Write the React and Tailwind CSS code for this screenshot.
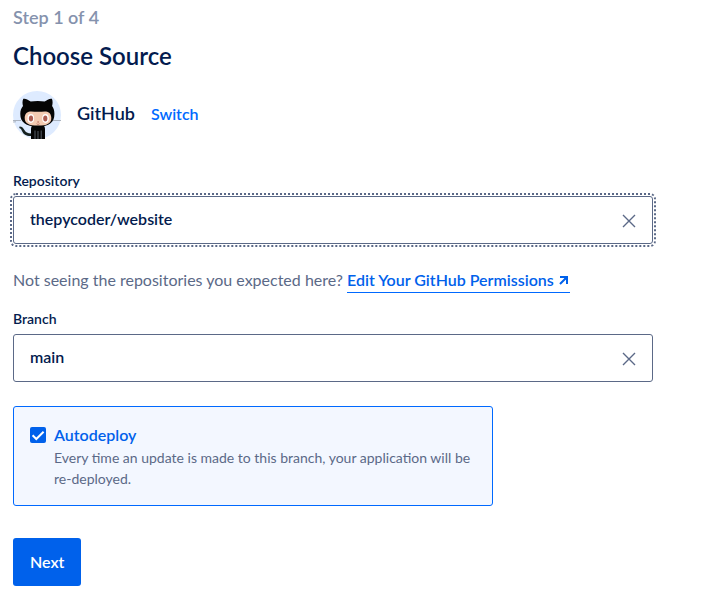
import React from "react";

function Octocat() {
  return (
    <svg viewBox="0 0 48 48" className="size-12 shrink-0" role="img" aria-label="GitHub">
      <circle cx="24" cy="24" r="24" fill="#deebff" />
      <path d="M0 29.500h8M0 31l3-.2M40 29.500h8" stroke="#a3acb8" strokeWidth="0.900" />
      <path
        d="M6.500 35.600c2.600.2 3.900 1.600 4.900 3.400 1.200 2.200 3 3.400 7.200 3.500l-.2 2.500c-5.200.2-8-1.800-9.400-5.100-.6-1.500-1.300-2.300-2.700-2.900z"
        fill="#15211f"
      />
      <path d="M18 38c0-3 2-5 7-5s7 2 7 5v10H18z" fill="#050505" />
      <path d="M22 39.500v8.500M25 40v8M28.200 39.500v8.500" stroke="#6a7380" strokeWidth="0.800" />
      <path
        d="M10.300 7.800c2-.7 5.500 1.200 7.400 2.800 2-.5 4.400-.7 7-.7s4.900.2 6.900.7c2-1.600 5.400-3.500 7.300-2.800 1 2.300.8 5 .2 7.200 1.600 2.200 2.300 4.600 2.300 8 0 8.200-4.700 12.600-16.700 12.600S7.300 31.200 7.300 23c0-3.400.9-5.800 2.700-8-.6-2.200-.8-4.900.3-7.200z"
        fill="#050505"
      />
      <path
        d="M17 20.500c2.400-.2 5 .3 8 .3s5.600-.5 8-.3c3.400.3 5.300 3.200 5.300 6.500 0 5.500-4.100 7.600-13.300 7.600s-13.300-2.100-13.300-7.600c0-3.300 1.900-6.200 5.300-6.500z"
        fill="#f4cbb2"
      />
      <ellipse cx="17.800" cy="27.500" rx="3.300" ry="4.400" fill="#fff" />
      <ellipse cx="32.500" cy="27.500" rx="3.300" ry="4.400" fill="#fff" />
      <ellipse cx="18" cy="27.600" rx="2.100" ry="3" fill="#ad5c51" />
      <ellipse cx="32.300" cy="27.600" rx="2.100" ry="3" fill="#ad5c51" />
      <circle cx="25.100" cy="31" r="0.700" fill="#ad5c51" />
      <path d="M23.600 32.700c.8.900 2.200.9 3 0" fill="none" stroke="#ad5c51" strokeWidth="0.700" />
    </svg>
  );
}

function ClearableField({ id, label, value, focused = false }) {
  return (
    <div>
      <label htmlFor={id} className="mb-[5px] block text-sm leading-5 font-semibold text-[#031b4e]">
        {label}
      </label>
      <div
        className={
          focused
            ? "flex h-12 items-center rounded-[3px] border border-[#5b6987] outline-2 outline-offset-1 outline-dotted outline-[#5b6987]"
            : "flex h-12 items-center rounded-[3px] border border-[#5b6987]"
        }
      >
        <input
          id={id}
          type="text"
          defaultValue={value}
          className="h-full min-w-0 flex-1 bg-transparent pb-[3px] pl-4 text-base font-semibold text-[#031b4e] outline-none"
        />
        <button type="button" aria-label={"Clear " + label} className="mr-4 pt-px text-[#5b6987]">
          <svg viewBox="0 0 14 14" className="size-[14px]" fill="none" stroke="currentColor" strokeWidth="1.400">
            <path d="M1 1l12 12M13 1L1 13" />
          </svg>
        </button>
      </div>
    </div>
  );
}

export default function App() {
  return (
    <main className="bg-white px-[13px] pt-[5px] pb-3 font-[Lato,sans-serif] text-base">
      <form className="max-w-[640px]" onSubmit={(e) => e.preventDefault()}>
        <p className="text-lg leading-6 font-semibold text-[#8592ad]">Step 1 of 4</p>
        <h1 className="mt-[11px] text-2xl leading-8 font-semibold text-[#031b4e]">Choose Source</h1>

        <div className="mt-[19px] mb-8 flex items-center gap-4">
          <Octocat />
          <div className="flex items-baseline gap-4 pb-1">
            <h2 className="text-lg leading-6 font-semibold text-[#031b4e]">GitHub</h2>
            <a href="#switch" className="font-semibold text-[#0069ff]">Switch</a>
          </div>
        </div>

        <ClearableField id="repository" label="Repository" value="thepycoder/website" focused />

        <p className="mt-6 mb-4 leading-6 text-[#5b6987]">
          Not seeing the repositories you expected here?{" "}
          <a
            href="#permissions"
            className="inline-flex items-center gap-1 border-b border-[#0069ff] font-semibold text-[#0061eb]"
          >
            Edit Your GitHub Permissions
            <svg viewBox="0 0 12 12" className="size-3" fill="none" stroke="currentColor" strokeWidth="2">
              <path d="M2 3h7v7M9 3L2 10" />
              <path d="M5 3h4v4z" fill="currentColor" stroke="none" />
            </svg>
          </a>
        </p>

        <ClearableField id="branch" label="Branch" value="main" />

        <div className="mt-6 flex min-h-[100px] max-w-[480px] items-start gap-2 rounded-[3px] border border-[#0069ff] bg-[#f3f7ff] px-4 pt-4">
          <span className="mt-1 grid size-4 shrink-0">
            <input
              id="autodeploy"
              type="checkbox"
              defaultChecked
              aria-describedby="autodeploy-hint"
              className="col-start-1 row-start-1 size-4 appearance-none rounded-xs bg-[#0061eb]"
            />
            <svg
              viewBox="0 0 16 16"
              className="pointer-events-none col-start-1 row-start-1 size-4"
              fill="none"
              stroke="#fff"
              strokeWidth="2"
            >
              <path d="M2.600 8.300l3.700 3.700 7.300-7.300" />
            </svg>
          </span>
          <div>
            <label htmlFor="autodeploy" className="block leading-6 font-semibold text-[#0061eb]">
              Autodeploy
            </label>
            <p id="autodeploy-hint" className="text-sm leading-[21px] text-[#5b6987]">
              Every time an update is made to this branch, your application will be re-deployed.
            </p>
          </div>
        </div>

        <button type="submit" className="mt-8 h-12 rounded-[3px] bg-[#0061eb] px-[17px] font-semibold text-white">
          Next
        </button>
      </form>
    </main>
  );
}
